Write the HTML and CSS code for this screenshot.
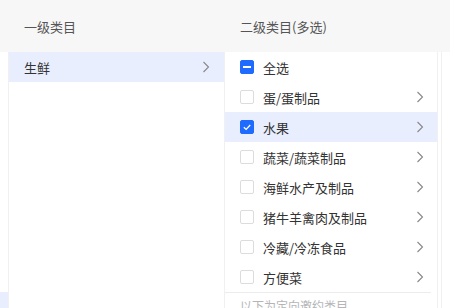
FILE: index.html
```html
<!DOCTYPE html>
<html lang="zh-CN">
<head>
    <meta charset="UTF-8">
    <meta name="viewport" content="width=device-width, initial-scale=1.0">
    <title>选择类目</title>
    <link rel="stylesheet" href="styles.css">
</head>
<body>
    <div class="picker">
        <div class="head">
            <div class="head-cell first">一级类目</div>
            <div class="head-cell second">二级类目(多选)</div>
        </div>
        <div class="cols">
            <div class="col col-prev">
                <div class="prev-gap"></div>
                <div class="prev-item"></div>
            </div>
            <div class="col col-one">
                <div class="row active">
                    <span class="label">生鲜</span>
                    <svg class="arrow" viewBox="0 0 8 12"><path d="M1.5 1 L6.5 6 L1.5 11" /></svg>
                </div>
            </div>
            <div class="col col-two">
                <div class="row">
                    <span class="box half"><i></i></span>
                    <span class="label">全选</span>
                </div>
                <div class="row">
                    <span class="box"></span>
                    <span class="label">蛋/蛋制品</span>
                    <svg class="arrow" viewBox="0 0 8 12"><path d="M1.5 1 L6.5 6 L1.5 11" /></svg>
                </div>
                <div class="row active">
                    <span class="box checked">
                        <svg viewBox="0 0 14 14"><path d="M3.3 7.2 L6 9.8 L10.8 4.6" /></svg>
                    </span>
                    <span class="label">水果</span>
                    <svg class="arrow" viewBox="0 0 8 12"><path d="M1.5 1 L6.5 6 L1.5 11" /></svg>
                </div>
                <div class="row">
                    <span class="box"></span>
                    <span class="label">蔬菜/蔬菜制品</span>
                    <svg class="arrow" viewBox="0 0 8 12"><path d="M1.5 1 L6.5 6 L1.5 11" /></svg>
                </div>
                <div class="row">
                    <span class="box"></span>
                    <span class="label">海鲜水产及制品</span>
                    <svg class="arrow" viewBox="0 0 8 12"><path d="M1.5 1 L6.5 6 L1.5 11" /></svg>
                </div>
                <div class="row">
                    <span class="box"></span>
                    <span class="label">猪牛羊禽肉及制品</span>
                    <svg class="arrow" viewBox="0 0 8 12"><path d="M1.5 1 L6.5 6 L1.5 11" /></svg>
                </div>
                <div class="row">
                    <span class="box"></span>
                    <span class="label">冷藏/冷冻食品</span>
                    <svg class="arrow" viewBox="0 0 8 12"><path d="M1.5 1 L6.5 6 L1.5 11" /></svg>
                </div>
                <div class="row">
                    <span class="box"></span>
                    <span class="label">方便菜</span>
                    <svg class="arrow" viewBox="0 0 8 12"><path d="M1.5 1 L6.5 6 L1.5 11" /></svg>
                </div>
                <div class="section">以下为定向邀约类目</div>
            </div>
            <div class="col col-next"></div>
        </div>
    </div>
</body>
</html>
```

FILE: styles.css
```css
*,
*:before,
*:after {
    margin: 0;
    padding: 0;
    box-sizing: border-box;
}

body {
    font-family: "Noto Sans CJK SC", "Noto Sans", sans-serif;
    background-color: #ffffff;
    color: #333333;
    width: 450px;
    height: 308px;
    overflow: hidden;
}

.picker {
    width: 450px;
    height: 308px;
    display: flex;
    flex-direction: column;
}

.head {
    height: 52px;
    display: flex;
    align-items: center;
    background-color: #f7f7f8;
    font-size: 13px;
    color: #555555;
}

.head-cell.first {
    width: 224px;
    padding-left: 24px;
}

.head-cell.second {
    padding-left: 16px;
}

.cols {
    flex: 1;
    display: flex;
    overflow: hidden;
}

.col-prev {
    width: 9px;
    border-right: 1px solid #f0f0f2;
}

.prev-gap {
    height: 240px;
}

.prev-item {
    height: 30px;
    background-color: #e8eefd;
}

.col-one {
    width: 216px;
    border-right: 1px solid #f0f0f2;
}

.col-two {
    width: 213px;
    border-right: 1px solid #f0f0f2;
}

.col-next {
    margin-left: 3px;
    flex: 1;
    border-left: 1px solid #f0f0f2;
}

.row {
    height: 30px;
    display: flex;
    align-items: center;
    font-size: 13px;
    color: #333333;
}

.col-one .row {
    padding: 0 14px 0 15px;
}

.col-two .row {
    padding: 0 13px 0 15px;
}

.row.active {
    background-color: #e8eefd;
}

.row .label {
    flex: 1;
}

.arrow {
    width: 8px;
    height: 12px;
    fill: none;
    stroke: #888888;
    stroke-width: 1.1;
}

.box {
    width: 14px;
    height: 14px;
    margin-right: 9px;
    border: 1px solid #dcdcdf;
    border-radius: 2px;
    background-color: #ffffff;
    display: flex;
    align-items: center;
    justify-content: center;
}

.box.half,
.box.checked {
    background-color: #1f6bff;
    border-color: #1f6bff;
}

.box.half i {
    width: 8px;
    height: 2px;
    background-color: #ffffff;
}

.box.checked svg {
    width: 14px;
    height: 14px;
    fill: none;
    stroke: #ffffff;
    stroke-width: 1.5;
}

.section {
    margin: 0 6px 0 0;
    padding: 4px 0 0 15px;
    border-top: 1px solid #ececee;
    font-size: 12px;
    color: #b5b5b8;
}
```
